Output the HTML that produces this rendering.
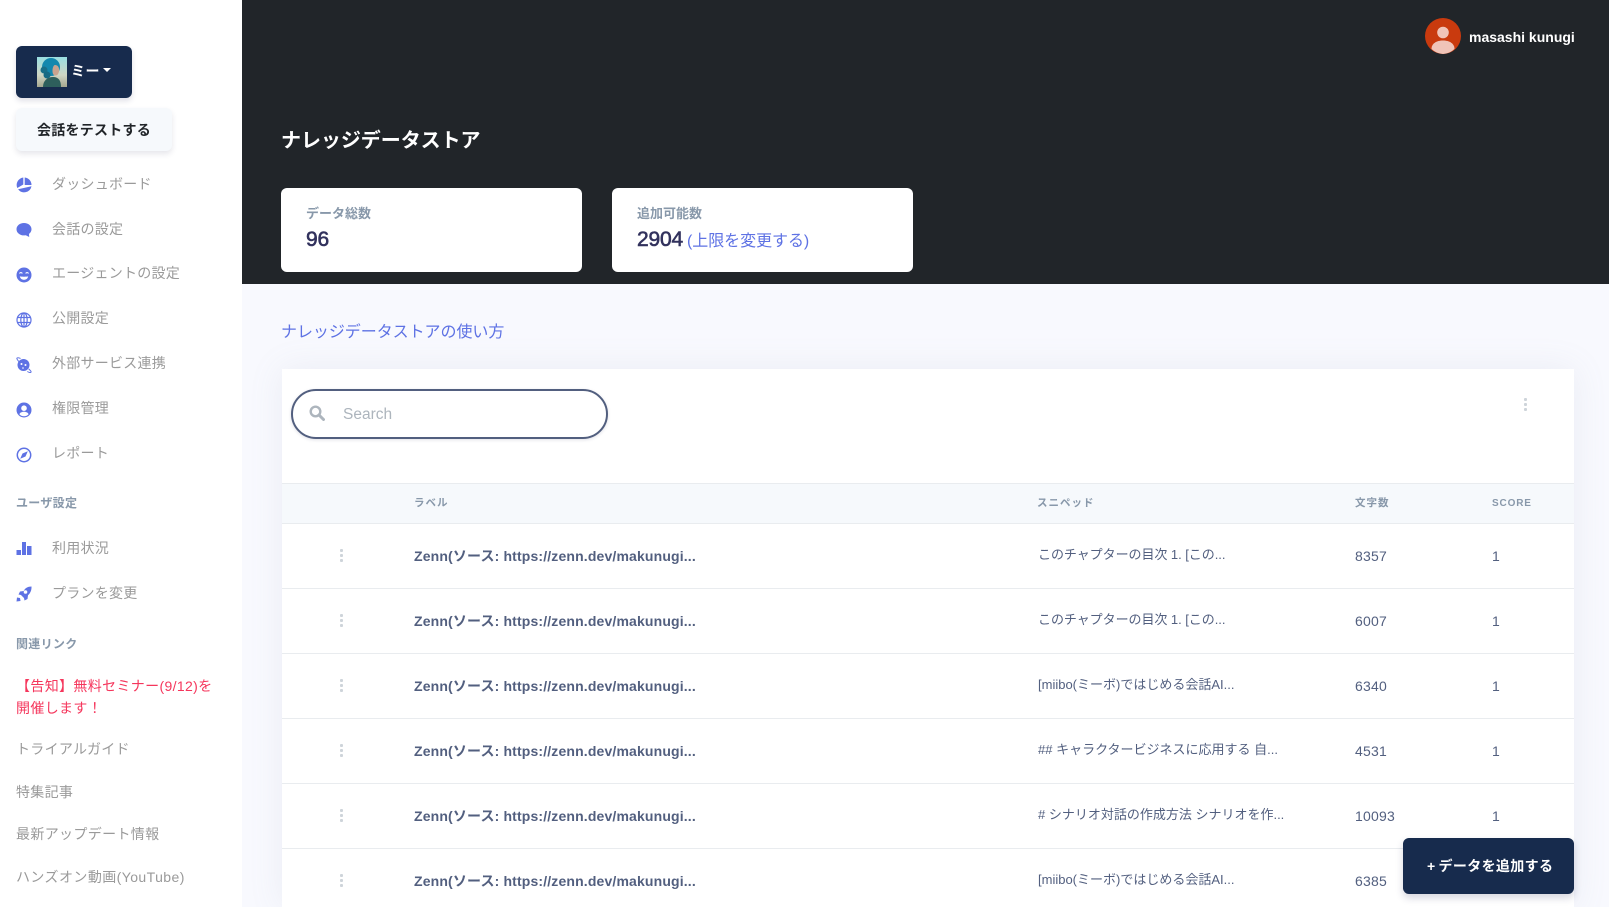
<!DOCTYPE html>
<html lang="ja"><head><meta charset="utf-8"><title>ナレッジデータストア</title>
<style>
*{box-sizing:border-box}
html,body{margin:0;padding:0;width:1609px;height:907px;overflow:hidden;background:#f8f9fe;font-family:"Liberation Sans","Noto Sans CJK JP",sans-serif}
.t{position:absolute;white-space:nowrap;line-height:20px;height:20px}
.box{position:absolute}
.nav{left:52px;font-size:14px;color:#9a9a9a;letter-spacing:.25px}
.sec{left:16px;font-size:12px;font-weight:700;color:#8898aa;letter-spacing:.3px}
.lnk{left:16px;font-size:14px;color:#9a9a9a;letter-spacing:.3px}
.ic{position:absolute;left:16px;width:16px;height:16px;fill:#5e72e4}
.th{font-size:10.5px;font-weight:700;color:#8898aa;letter-spacing:1px}
.l{left:414px;font-size:14px;font-weight:700;color:#525f7f;letter-spacing:.15px}
.s{left:1038px;font-size:13px;color:#525f7f}
.c{left:1355px;font-size:14px;color:#525f7f;letter-spacing:.2px}
.n{left:1492px;font-size:14px;color:#525f7f}
.hr{position:absolute;left:282px;width:1292px;height:1px;background:#e9ecef}
.d{position:absolute;width:3px;height:13px;background:radial-gradient(circle at 1.5px 1.5px,#ced4da 1.5px,transparent 1.6px) 0 0/3px 5px repeat-y}
</style></head><body>

<div class="box" style="left:0;top:0;width:242px;height:907px;background:#fff"></div>
<div class="box" style="left:242px;top:0;width:1367px;height:284px;background:#212529"></div>

<div class="box" style="left:16px;top:46px;width:116px;height:52px;background:#172b4d;border-radius:6px;box-shadow:0 3px 6px rgba(50,50,93,.15)"></div>
<svg class="box" style="left:37px;top:57px" width="30" height="30" viewBox="0 0 30 30"><defs><linearGradient id="bg" x1="0" y1="0" x2="0" y2="1"><stop offset="0" stop-color="#9adfe2"/><stop offset=".6" stop-color="#cfd6c4"/><stop offset="1" stop-color="#a6a78f"/></linearGradient></defs><rect width="30" height="30" fill="url(#bg)"/><path d="M6 30c0-6 4-10 10-10s8 4 8 10z" fill="#2e5f5c"/><circle cx="14" cy="10" r="9" fill="#1488ae"/><circle cx="7" cy="13" r="3.500" fill="#1a6f88"/><circle cx="10" cy="18" r="3.500" fill="#176a84"/><path d="M18 8c3 0 4.500 2.500 4 6-.4 3-1.700 4.500-3.500 4.500s-3-1.500-3-4.500S16.500 8 18 8z" fill="#c9a38f"/></svg>
<span class="t" style="left:71px;top:61px;font-size:14px;font-weight:700;color:#fff;letter-spacing:.5px">ミー</span>
<div class="box" style="left:103px;top:68px;border-left:4px solid transparent;border-right:4px solid transparent;border-top:4px solid #fff"></div>

<div class="box" style="left:16px;top:108px;width:156px;height:43px;background:#f6f9fc;border-radius:6px;box-shadow:0 3px 6px rgba(50,50,93,.12)"></div>
<span class="t" style="left:37px;top:120px;font-size:14px;font-weight:700;color:#212529;letter-spacing:.25px">会話をテストする</span>

<svg class="ic" style="top:177px" viewBox="0 0 16 16"><path d="M7.300.5v7l-6 3.500A7.500 7.500 0 0 1 7.300.500zM8.700.5a7.500 7.500 0 0 1 6.800 7.500H8.700zM15.500 9.300a7.500 7.500 0 0 1-13.400 3z"/></svg>
<span class="t nav" style="top:174px">ダッシュボード</span>
<svg class="ic" style="top:222px" viewBox="0 0 16 16"><path d="M8 1c4.200 0 7.500 2.700 7.500 6.200 0 2-1 3.600-2.500 4.700l.2 3.100-3.400-1.800C9.200 13.300 8.600 13.400 8 13.400 3.800 13.400.5 10.700.5 7.200S3.800 1 8 1z"/></svg>
<span class="t nav" style="top:219px">会話の設定</span>
<svg class="ic" style="top:267px" viewBox="0 0 16 16"><circle cx="8" cy="8" r="7.500"/><path d="M3.500 6.500c.5-1.300 2.300-1.300 2.800 0M9.700 6.500c.5-1.300 2.300-1.300 2.800 0" fill="none" stroke="#fff" stroke-width="1.100"/><path d="M3.800 9.300c1 .6 7.400.6 8.400 0-.4 2.200-2 3.500-4.200 3.500s-3.800-1.300-4.200-3.500z" fill="#fff"/></svg>
<span class="t nav" style="top:263px">エージェントの設定</span>
<svg class="ic" style="top:312px" viewBox="0 0 16 16"><g fill="none" stroke="#5e72e4" stroke-width="1.200"><circle cx="8" cy="8" r="7"/><ellipse cx="8" cy="8" rx="3.200" ry="7"/><path d="M1.500 5.500h13M1.500 10.500h13M8 1v14"/></g></svg>
<span class="t nav" style="top:308px">公開設定</span>
<svg class="ic" style="top:357px" viewBox="0 0 16 16"><circle cx="7.500" cy="8" r="6"/><circle cx="5.500" cy="7" r="1" fill="#fff"/><circle cx="9.500" cy="8" r="1" fill="#fff"/><circle cx="7" cy="11" r=".8" fill="#fff"/><path d="M2.800 4.500C1 2.500.4 1.300 1.200.9c.6-.3 2-.1 3.300.6M12.600 11.800c1.800 1.800 3 2.800 2.300 3.500-.6.500-2.200 0-3.600-.8" fill="none" stroke="#5e72e4" stroke-width="1"/></svg>
<span class="t nav" style="top:353px">外部サービス連携</span>
<svg class="ic" style="top:402px" viewBox="0 0 16 16"><circle cx="8" cy="8" r="7.500"/><circle cx="8" cy="6.200" r="2.800" fill="#fff"/><path d="M3.400 12.300C4 10.500 6 9.800 8 9.800s4 .7 4.600 2.500A6 6 0 0 1 8 14.300a6 6 0 0 1-4.600-2z" fill="#fff"/></svg>
<span class="t nav" style="top:398px">権限管理</span>
<svg class="ic" style="top:447px" viewBox="0 0 16 16"><circle cx="8" cy="8" r="6.700" fill="none" stroke="#5e72e4" stroke-width="1.500"/><path d="M11.800 4.200 9.500 9.500 4.200 11.800 6.500 6.500z"/></svg>
<span class="t nav" style="top:443px">レポート</span>

<span class="t sec" style="top:493px">ユーザ設定</span>
<svg class="ic" style="top:540px" viewBox="0 0 16 16"><path d="M.5 10h4.500v5H.5zM6 2h4v13H6zM11 6h4.500v9H11z"/></svg>
<span class="t nav" style="top:538px">利用状況</span>
<svg class="ic" style="top:586px" viewBox="0 0 16 16"><path d="M15.500.500c.2 3.500-1 6.500-3.500 8.800l-.5 3.700-3 1.500-.5-2.500-3-3-2.500-.5 1.500-3 3.700-.5C9 2 12 .5 15.500.500z"/><circle cx="9.500" cy="6" r="1.800" fill="#fff"/><path d="M1 11.500 4 12l.5 3-4 .5z"/></svg>
<span class="t nav" style="top:583px">プランを変更</span>

<span class="t sec" style="top:634px">関連リンク</span>
<span class="t" style="left:16px;top:676px;font-size:14px;color:#f5365c;letter-spacing:.35px">【告知】無料セミナー(9/12)を</span>
<span class="t" style="left:16px;top:698px;font-size:14px;color:#f5365c;letter-spacing:.35px">開催します！</span>
<span class="t lnk" style="top:739px">トライアルガイド</span>
<span class="t lnk" style="top:782px">特集記事</span>
<span class="t lnk" style="top:824px;letter-spacing:.35px">最新アップデート情報</span>
<span class="t lnk" style="top:867px;letter-spacing:.42px">ハンズオン動画(YouTube)</span>

<svg class="box" style="left:1425px;top:18px" width="36" height="36" viewBox="0 0 36 36"><circle cx="18" cy="18" r="18" fill="#c93a0e"/><circle cx="18" cy="14.500" r="5.800" fill="#f0c4b8"/><path d="M6.500 31c0-5.500 5-8.500 11.500-8.500S29.500 25.500 29.500 31A18 18 0 0 1 18 36a18 18 0 0 1-11.500-5z" fill="#f0c4b8"/></svg>
<span class="t" style="left:1469px;top:27px;font-size:14px;font-weight:700;color:#fff">masashi kunugi</span>

<span class="t" style="left:281px;top:131px;font-size:20px;font-weight:700;color:#fff;letter-spacing:-.05px">ナレッジデータストア</span>

<div class="box" style="left:281px;top:188px;width:301px;height:84px;background:#fff;border-radius:6px"></div>
<span class="t" style="left:306px;top:204px;font-size:13px;font-weight:700;color:#8898aa">データ総数</span>
<span class="t" style="left:306px;top:230px;font-size:21px;color:#32325d;-webkit-text-stroke:.6px #32325d;letter-spacing:-.2px">96</span>
<div class="box" style="left:612px;top:188px;width:301px;height:84px;background:#fff;border-radius:6px"></div>
<span class="t" style="left:637px;top:204px;font-size:13px;font-weight:700;color:#8898aa">追加可能数</span>
<span class="t" style="left:637px;top:230px;font-size:21px;color:#32325d;-webkit-text-stroke:.6px #32325d;letter-spacing:-.2px">2904</span>
<span class="t" style="left:687px;top:232px;font-size:16px;color:#5e72e4;letter-spacing:-.05px">(上限を変更する)</span>

<span class="t" style="left:281px;top:323px;font-size:16px;color:#5e72e4;letter-spacing:-.05px">ナレッジデータストアの使い方</span>

<div class="box" style="left:282px;top:369px;width:1292px;height:538px;background:#fff;box-shadow:0 0 2rem rgba(136,152,170,.12)"></div>
<div class="box" style="left:291px;top:389px;width:317px;height:50px;border:2px solid #525f7f;border-radius:25px;background:#fff;box-shadow:0 1px 3px rgba(50,50,93,.15)"></div>
<svg class="box" style="left:309px;top:405px" width="16" height="16" viewBox="0 0 16 16"><circle cx="6.500" cy="6.500" r="4.800" fill="none" stroke="#adb5bd" stroke-width="2.400"/><path d="M10 10l4.500 4.500" stroke="#adb5bd" stroke-width="3" stroke-linecap="round"/></svg>
<span class="t" style="left:343px;top:405px;font-size:15.500px;color:#adb5bd">Search</span>
<div class="d" style="left:1524px;top:398px"></div>

<div class="box" style="left:282px;top:483px;width:1292px;height:41px;background:#f6f9fc;border-top:1px solid #e9ecef;border-bottom:1px solid #e9ecef"></div>
<span class="t th" style="left:414px;top:493px">ラベル</span>
<span class="t th" style="left:1037px;top:493px">スニペッド</span>
<span class="t th" style="left:1355px;top:493px">文字数</span>
<span class="t th" style="left:1492px;top:494px;font-size:10px;letter-spacing:.85px">SCORE</span>

<div class="d" style="left:340px;top:549px"></div>
<span class="t l" style="top:546px">Zenn(ソース: https://zenn.dev/makunugi...</span>
<span class="t s" style="top:545px;letter-spacing:-.05px">このチャプターの目次 1. [この...</span>
<span class="t c" style="top:546px">8357</span><span class="t n" style="top:546px">1</span>
<div class="hr" style="top:588px"></div>

<div class="d" style="left:340px;top:614px"></div>
<span class="t l" style="top:611px">Zenn(ソース: https://zenn.dev/makunugi...</span>
<span class="t s" style="top:610px;letter-spacing:-.05px">このチャプターの目次 1. [この...</span>
<span class="t c" style="top:611px">6007</span><span class="t n" style="top:611px">1</span>
<div class="hr" style="top:653px"></div>

<div class="d" style="left:340px;top:679px"></div>
<span class="t l" style="top:676px">Zenn(ソース: https://zenn.dev/makunugi...</span>
<span class="t s" style="top:675px">[miibo(ミーボ)ではじめる会話AI...</span>
<span class="t c" style="top:676px">6340</span><span class="t n" style="top:676px">1</span>
<div class="hr" style="top:718px"></div>

<div class="d" style="left:340px;top:744px"></div>
<span class="t l" style="top:741px">Zenn(ソース: https://zenn.dev/makunugi...</span>
<span class="t s" style="top:740px">## キャラクタービジネスに応用する 自...</span>
<span class="t c" style="top:741px">4531</span><span class="t n" style="top:741px">1</span>
<div class="hr" style="top:783px"></div>

<div class="d" style="left:340px;top:809px"></div>
<span class="t l" style="top:806px">Zenn(ソース: https://zenn.dev/makunugi...</span>
<span class="t s" style="top:805px"># シナリオ対話の作成方法 シナリオを作...</span>
<span class="t c" style="top:806px">10093</span><span class="t n" style="top:806px">1</span>
<div class="hr" style="top:848px"></div>

<div class="d" style="left:340px;top:874px"></div>
<span class="t l" style="top:871px">Zenn(ソース: https://zenn.dev/makunugi...</span>
<span class="t s" style="top:870px">[miibo(ミーボ)ではじめる会話AI...</span>
<span class="t c" style="top:871px">6385</span>

<div class="box" style="left:1403px;top:838px;width:171px;height:56px;background:#172b4d;border-radius:6px;box-shadow:0 4px 8px rgba(50,50,93,.2)"></div>
<span class="t" style="left:1427px;top:856px;font-size:14px;font-weight:700;color:#fff;letter-spacing:.35px">+<span style="margin-left:3px">データを追加する</span></span>
</body></html>
